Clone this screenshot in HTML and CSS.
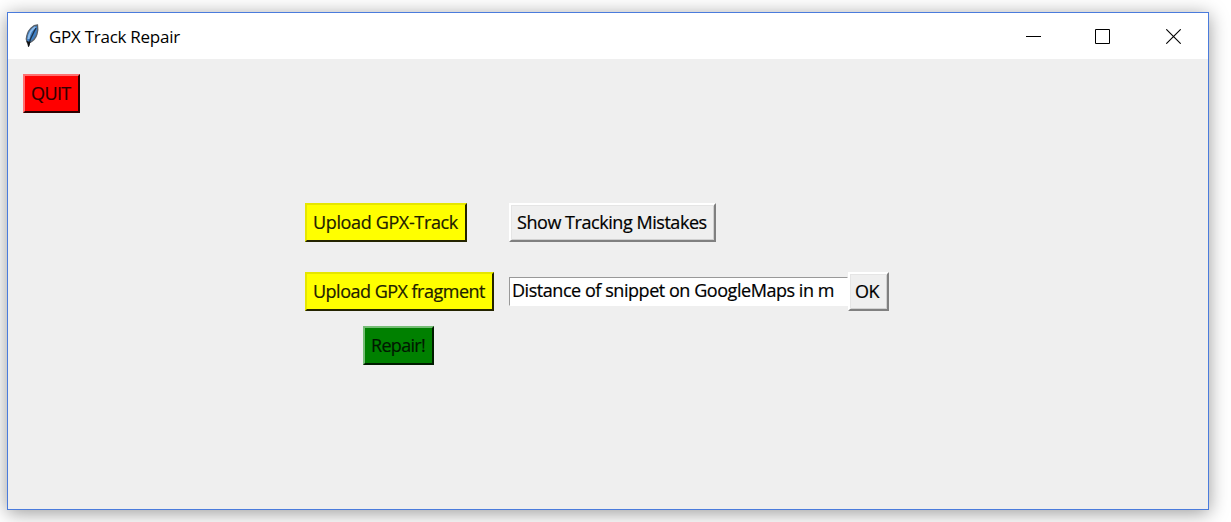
FILE: index.html
```html
<!DOCTYPE html>
<html lang="en">
<head>
<meta charset="utf-8">
<title>GPX Track Repair</title>
<link rel="stylesheet" href="styles.css">
</head>
<body>
<div class="window">
  <header class="titlebar">
    <svg class="feather" width="16" height="24" viewBox="0 0 16 24">
      <path d="M13.500 1C9 1 4 6 3 11c-1 3-1 5 0 7l2 1c4-2 7-5 8-9 1-3 1-6 .5-9z" fill="#3f7fc4" stroke="#59616b" stroke-width="1.300"/>
      <path d="M11.500 3C8 5 5 10 4.500 15" fill="none" stroke="#8fbdeb" stroke-width="2"/>
      <path d="M12 4C9.500 9 6 13 4.500 22.500" fill="none" stroke="#1d3148" stroke-width="1.300"/>
      <path d="M3 17l1.500 5.500L6 18" fill="#111" stroke="#111" stroke-width=".8"/>
    </svg>
    <h1 class="title"><span>GPX Track Repair</span></h1>
    <svg class="control" width="15" height="15" viewBox="0 0 15 15"><path d="M0 7.500h15" stroke="#000"/></svg>
    <svg class="control maximize" width="15" height="15" viewBox="0 0 15 15"><path d="M.5.5h14v14H.5z" fill="none" stroke="#000"/></svg>
    <svg class="control close" width="15" height="15" viewBox="0 0 15 15"><path d="M.3.3l14.400 14.400M14.700.3L.3 14.700" stroke="#000" stroke-width="1.100"/></svg>
  </header>
  <main class="content">
    <button class="btn quit"><span>QUIT</span></button>
    <div class="form">
      <button class="btn yellow track"><span>Upload GPX-Track</span></button>
      <button class="btn mistakes"><span>Show Tracking Mistakes</span></button>
      <button class="btn yellow fragment"><span>Upload GPX fragment</span></button>
      <div class="distance">
        <div class="entry"><span>Distance of snippet on GoogleMaps in m</span></div>
        <button class="btn ok"><span>OK</span></button>
      </div>
      <button class="btn repair"><span>Repair!</span></button>
    </div>
  </main>
</div>
</body>
</html>
```
FILE: styles.css
```css
* { box-sizing: border-box; }
body {
  margin: 0;
  height: 522px;
  overflow: hidden;
  padding: 12px 0 0 7px;
  background: #fff;
  font-family: "Open Sans", "Noto Sans", sans-serif;
  font-size: 18px;
  color: #000;
}
.window {
  width: 1202px;
  height: 498px;
  border: 1px solid #4a7bdc;
  background: #efefef;
  box-shadow: 0 3px 18px rgba(0, 0, 0, .4);
}
.titlebar {
  display: flex;
  align-items: center;
  height: 46px;
  padding: 0 27px 0 16px;
  background: #fff;
}
.feather { margin-top: -1px; }
.title {
  flex: 1;
  margin: 1px 0 0 9px;
  font-size: 17px;
  font-weight: 400;
  line-height: 24px;
  letter-spacing: -.27px;
}
.control { margin-left: 55px; }
.control.maximize { margin-left: 54px; }
.control.close { margin-left: 56px; }
.content { padding: 15px; }
.btn {
  display: flex;
  align-items: center;
  height: 39px;
  margin: 0;
  padding: 0 0 1px 6px;
  border: 2px solid;
  border-color: #fff #808080 #808080 #fff;
  background: #efefef;
  box-shadow: inset 1px 1px #e5e5e5, inset -1px -1px #d0d0d0;
  font: inherit;
  line-height: 24px;
  color: #000;
  white-space: nowrap;
}
.btn span, .entry span {
  letter-spacing: -.45px;
  -webkit-text-stroke: .2px currentColor;
}
.quit {
  width: 57px;
  background: #f00;
  border-color: #ff7070 #2c0000 #2c0000 #ff7070;
  box-shadow: none;
  color: #300000;
}
.btn.quit span { letter-spacing: -.6px; }
.form {
  display: grid;
  grid-template-columns: 189px 380px;
  grid-template-rows: 54px 39px 39px;
  gap: 15px;
  margin: 90px 0 0 282px;
}
.yellow {
  background: #ff0;
  border-color: #e6e600 #242400 #242400 #e6e600;
  box-shadow: none;
  color: #202000;
}
.track { width: 162px; }
.btn.track span { letter-spacing: -.36px; }
.mistakes { width: 207px; }
.fragment { width: 189px; }
.btn.fragment span { letter-spacing: -.51px; }
.distance { display: flex; align-items: center; }
.entry {
  display: flex;
  align-items: center;
  width: 339px;
  height: 29px;
  padding: 0 0 2px 2px;
  margin-top: -1px;
  border: 1px solid;
  border-color: #999 #fff #fff #999;
  background: #fff;
  line-height: 24px;
  white-space: nowrap;
}
.ok { width: 41px; padding-left: 5px; }
.repair {
  width: 71px;
  margin-left: 58px;
  background: #008000;
  border-color: #75bd75 #001c00 #001c00 #75bd75;
  box-shadow: none;
  color: #001800;
}
.btn.repair span { letter-spacing: -.7px; }
```
